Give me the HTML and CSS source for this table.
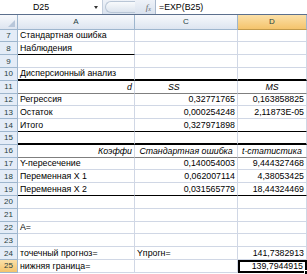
FILE: index.html
```html
<!DOCTYPE html>
<html lang="ru">
<head>
<meta charset="utf-8">
<link rel="stylesheet" href="styles.css">
</head>
<body>
<div class="fbar">
  <div class="namebox"><span class="nb-text">D25</span><span class="nb-arrow"></span></div>
  <div class="fx-area"><span class="oval"></span><span class="fx">f<sub>x</sub></span></div>
  <div class="formula">=EXP(B25)</div>
</div>
<div class="sheet">
  <div class="ch corner"><span class="tri"></span></div>
  <div class="ch">A</div>
  <div class="ch">C</div>
  <div class="ch ch-sel">D</div>

  <div class="rh">7</div><div class="c">Стандартная ошибка</div><div class="c"></div><div class="c"></div>
  <div class="rh">8</div><div class="c bb">Наблюдения</div><div class="c"></div><div class="c"></div>
  <div class="rh">9</div><div class="c"></div><div class="c"></div><div class="c"></div>
  <div class="rh">10</div><div class="c bb2">Дисперсионный анализ</div><div class="c bb2"></div><div class="c bb2"></div>
  <div class="rh">11</div><div class="c r i bg">d</div><div class="c i bg ss">SS</div><div class="c i bg ctr">MS</div>
  <div class="rh">12</div><div class="c">Регрессия</div><div class="c r">0,32771765</div><div class="c r">0,163858825</div>
  <div class="rh">13</div><div class="c">Остаток</div><div class="c r">0,000254248</div><div class="c r">2,11873E-05</div>
  <div class="rh">14</div><div class="c bb">Итого</div><div class="c r bb">0,327971898</div><div class="c bb"></div>
  <div class="rh">15</div><div class="c bb2"></div><div class="c bb2"></div><div class="c bb2"></div>
  <div class="rh">16</div><div class="c r i bg">Коэффи</div><div class="c i bg ctr">Стандартная ошибка</div><div class="c i bg tst">t-статистика</div>
  <div class="rh">17</div><div class="c">Y-пересечение</div><div class="c r">0,140054003</div><div class="c r">9,444327468</div>
  <div class="rh">18</div><div class="c">Переменная X 1</div><div class="c r">0,062007114</div><div class="c r">4,38053425</div>
  <div class="rh">19</div><div class="c bb">Переменная X 2</div><div class="c r bb">0,031565779</div><div class="c r bb">18,44324469</div>
  <div class="rh">20</div><div class="c"></div><div class="c"></div><div class="c"></div>
  <div class="rh">21</div><div class="c"></div><div class="c"></div><div class="c"></div>
  <div class="rh">22</div><div class="c">A=</div><div class="c"></div><div class="c"></div>
  <div class="rh">23</div><div class="c"></div><div class="c"></div><div class="c"></div>
  <div class="rh">24</div><div class="c">точечный прогноз=</div><div class="c">Yпрогн=</div><div class="c r">141,7382913</div>
  <div class="rh rh-sel">25</div><div class="c">нижняя граница=</div><div class="c"></div><div class="c r active">139,7944915<span class="handle"></span></div>
</div>
</body>
</html>
```

FILE: styles.css
```css
* { box-sizing: border-box; }
html, body { margin: 0; padding: 0; }
body {
  width: 307px;
  height: 274px;
  overflow: hidden;
  background: #ffffff;
  font-family: "Liberation Sans", Arial, sans-serif;
  font-size: 8.8px;
  color: #000;
}
.fbar {
  display: flex;
  height: 15px;
  background: #dfe7f1;
  border-bottom: 1px solid #5b6f8d;
}
.namebox {
  width: 103px;
  display: flex;
  align-items: center;
  background: #ffffff;
  border-right: 1px solid #c3cedd;
  position: relative;
}
.nb-text {
  flex: 1;
  text-align: center;
  padding-right: 12px;
  font-size: 8.8px;
}
.nb-arrow {
  width: 0; height: 0;
  margin-right: 4px;
  border-left: 2.5px solid transparent;
  border-right: 2.5px solid transparent;
  border-top: 3px solid #333;
}
.fx-area {
  width: 52px;
  display: flex;
  align-items: center;
  background: linear-gradient(#eef2f8, #d9e2ee);
}
.oval {
  width: 30px;
  height: 12px;
  margin-left: 2px;
  border-radius: 6px 0 0 6px;
  border: 1px solid #b9c6d6;
  border-right: none;
  background: linear-gradient(#f8fafc, #dce4ee);
}
.fx {
  margin-left: auto;
  margin-right: 4px;
  font-family: "Liberation Serif", serif;
  font-style: italic;
  font-size: 9px;
  color: #6b6b6b;
}
.fx sub { font-size: 6px; vertical-align: -1px; }
.formula {
  flex: 1;
  display: flex;
  align-items: center;
  padding-left: 3px;
  background: #ffffff;
  border-left: 1px solid #a9b8cc;
}
.sheet {
  display: grid;
  grid-template-columns: 18px 117px 103px 69px;
  grid-template-rows: 14.6px;
  grid-auto-rows: 12.8px;
}
.ch {
  display: flex;
  align-items: center;
  justify-content: center;
  background: linear-gradient(#f7f9fc, #dde5f0);
  border-right: 1px solid #9eb6ce;
  border-bottom: 1px solid #9eb6ce;
  color: #27413e;
  font-size: 8px;
}
.ch-sel {
  background: linear-gradient(#fbe0a8, #f4c46c);
  border-bottom-color: #c29a4b;
}
.corner { position: relative; }
.tri {
  position: absolute;
  right: 2px; bottom: 2px;
  width: 0; height: 0;
  border-left: 7px solid transparent;
  border-bottom: 7px solid #b8c7da;
}
.rh {
  display: flex;
  align-items: center;
  justify-content: center;
  background: #e4ecf7;
  border-right: 1px solid #9eb6ce;
  border-bottom: 1px solid #9eb6ce;
  color: #27413e;
  font-size: 8px;
}
.rh-sel {
  background: linear-gradient(#fbe0a8, #f4c46c);
}
.c {
  display: flex;
  align-items: center;
  padding: 0 2px;
  border-right: 1px solid #d0d7e5;
  border-bottom: 1px solid #d0d7e5;
  white-space: nowrap;
  overflow: hidden;
}
.r { justify-content: flex-end; }
.ctr { justify-content: center; }
.ss { padding-left: 33px; }
.tst { padding-left: 4px; }
.i { font-style: italic; }
.bb { border-bottom: 1.5px solid #000; }
.bb2 { border-bottom: 2px solid #000; }
.bg { border-bottom: 1.5px solid #7f7f7f; }
.active {
  position: relative;
  overflow: visible;
  border: 2px solid #000;
}
.handle {
  position: absolute;
  right: -4px;
  bottom: -4px;
  width: 5px;
  height: 5px;
  background: #000;
  border: 1px solid #fff;
}
```
